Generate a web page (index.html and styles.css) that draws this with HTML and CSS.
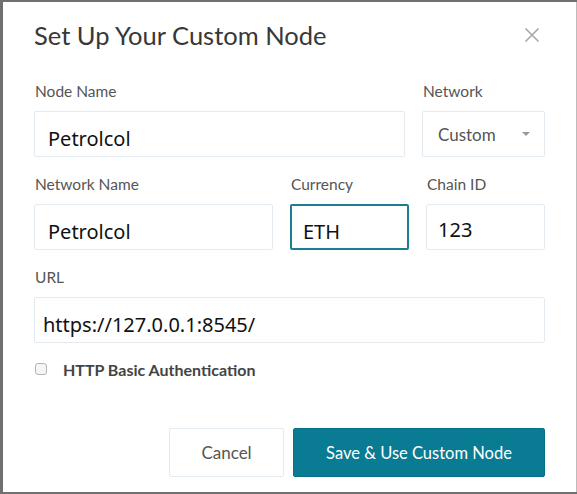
FILE: index.html
```html
<!DOCTYPE html>
<html>
<head>
<meta charset="utf-8">
<link rel="stylesheet" href="styles.css">
</head>
<body>
<div class="dialog">
  <div class="header">
    <h1 class="title">Set Up Your Custom Node</h1>
    <span class="close">
      <svg width="16" height="16" viewBox="0 0 16 16"><path d="M1.5 1.5 L14.5 14.5 M14.5 1.5 L1.5 14.5" stroke="#a8a8a8" stroke-width="1.6" fill="none"/></svg>
    </span>
  </div>
  <div class="row row1">
    <div class="field">
      <label class="label">Node Name</label>
      <div class="input">Petrolcol</div>
    </div>
    <div class="field">
      <label class="label">Network</label>
      <div class="input select"><span>Custom</span><span class="caret"></span></div>
    </div>
  </div>
  <div class="row row2">
    <div class="field">
      <label class="label">Network Name</label>
      <div class="input">Petrolcol</div>
    </div>
    <div class="field">
      <label class="label">Currency</label>
      <div class="input focus">ETH</div>
    </div>
    <div class="field">
      <label class="label">Chain ID</label>
      <div class="input chain">123</div>
    </div>
  </div>
  <div class="row row3">
    <div class="field">
      <label class="label">URL</label>
      <div class="input url">https://127.0.0.1:8545/</div>
    </div>
  </div>
  <div class="check">
    <span class="box"></span>
    <span class="check-label">HTTP Basic Authentication</span>
  </div>
  <div class="actions">
    <button class="btn cancel">Cancel</button>
    <button class="btn primary">Save &amp; Use Custom Node</button>
  </div>
</div>
</body>
</html>
```
FILE: styles.css
```css
html, body {
  margin: 0;
  padding: 0;
}
body {
  background: #707070;
  width: 577px;
  height: 494px;
  overflow: hidden;
  font-family: Lato, "Noto Sans", sans-serif;
}
.dialog {
  background: #fff;
  margin: 2px 0 0 3px;
  height: 490px;
  box-sizing: border-box;
  padding: 0 31px 0 31px;
  border-right: 1px solid #bcbcbc;
}
.header {
  display: flex;
  justify-content: space-between;
  align-items: center;
  height: 66px;
}
.title {
  margin: 0;
  font-weight: 400;
  font-size: 25.5px;
  color: #383838;
  margin-top: -1px;
}
.close {
  display: flex;
  margin-right: 5px;
}
.row {
  display: flex;
  gap: 17px;
}
.row1 { margin-top: 14px; }
.row2 { margin-top: 18px; }
.row3 { margin-top: 18px; }
.row1 .field:first-child { width: 371px; }
.row1 .field:last-child { width: 123px; }
.row2 .field:first-child { width: 239px; }
.row2 .field:nth-child(2) { width: 119px; }
.row2 .field:last-child { width: 119px; }
.row3 .field { width: 511px; }
.field {
  display: flex;
  flex-direction: column;
}
.label {
  font-size: 15.5px;
  color: #555;
  line-height: 18px;
  height: 18px;
  margin-bottom: 11px;
  padding-left: 1px;
}
.input {
  height: 46px;
  box-sizing: border-box;
  border: 1px solid #e4ebf0;
  border-radius: 2px;
  display: flex;
  align-items: center;
  padding: 9px 13px 0;
  font-family: "Noto Sans", "Open Sans", sans-serif;
  font-size: 20px;
  color: #111;
}
.input.url {
  padding-left: 8px;
}
.input.chain {
  padding-top: 5px;
  padding-left: 11px;
}
.input.focus {
  border: 2px solid #1d7d93;
  padding-left: 11px;
}
.select {
  justify-content: space-between;
  font-family: Lato, sans-serif;
  font-size: 17px;
  color: #555;
  padding: 0 14px 0 15px;
}
.caret {
  width: 0;
  height: 0;
  border-left: 4px solid transparent;
  border-right: 4px solid transparent;
  border-top: 4px solid #999;
}
.check {
  display: flex;
  align-items: center;
  margin-top: 17px;
  height: 18px;
}
.box {
  width: 12px;
  height: 12px;
  box-sizing: border-box;
  border: 1px solid #b5b5b5;
  border-radius: 3px;
  background: #f5f5f5;
  margin-left: 1px;
}
.check-label {
  margin-left: 16px;
  font-size: 16px;
  font-weight: 700;
  color: #444;
}
.actions {
  display: flex;
  justify-content: flex-end;
  gap: 9px;
  margin-top: 50px;
}
.btn {
  height: 49px;
  border-radius: 2px;
  font-family: Lato, sans-serif;
  font-size: 16.5px;
  cursor: pointer;
}
.cancel {
  width: 115px;
  background: #fff;
  border: 1px solid #e4ebf0;
  color: #555;
  font-size: 17px;
}
.primary {
  width: 252px;
  background: #097b93;
  border: 1px solid #077189;
  color: #fff;
}
```
